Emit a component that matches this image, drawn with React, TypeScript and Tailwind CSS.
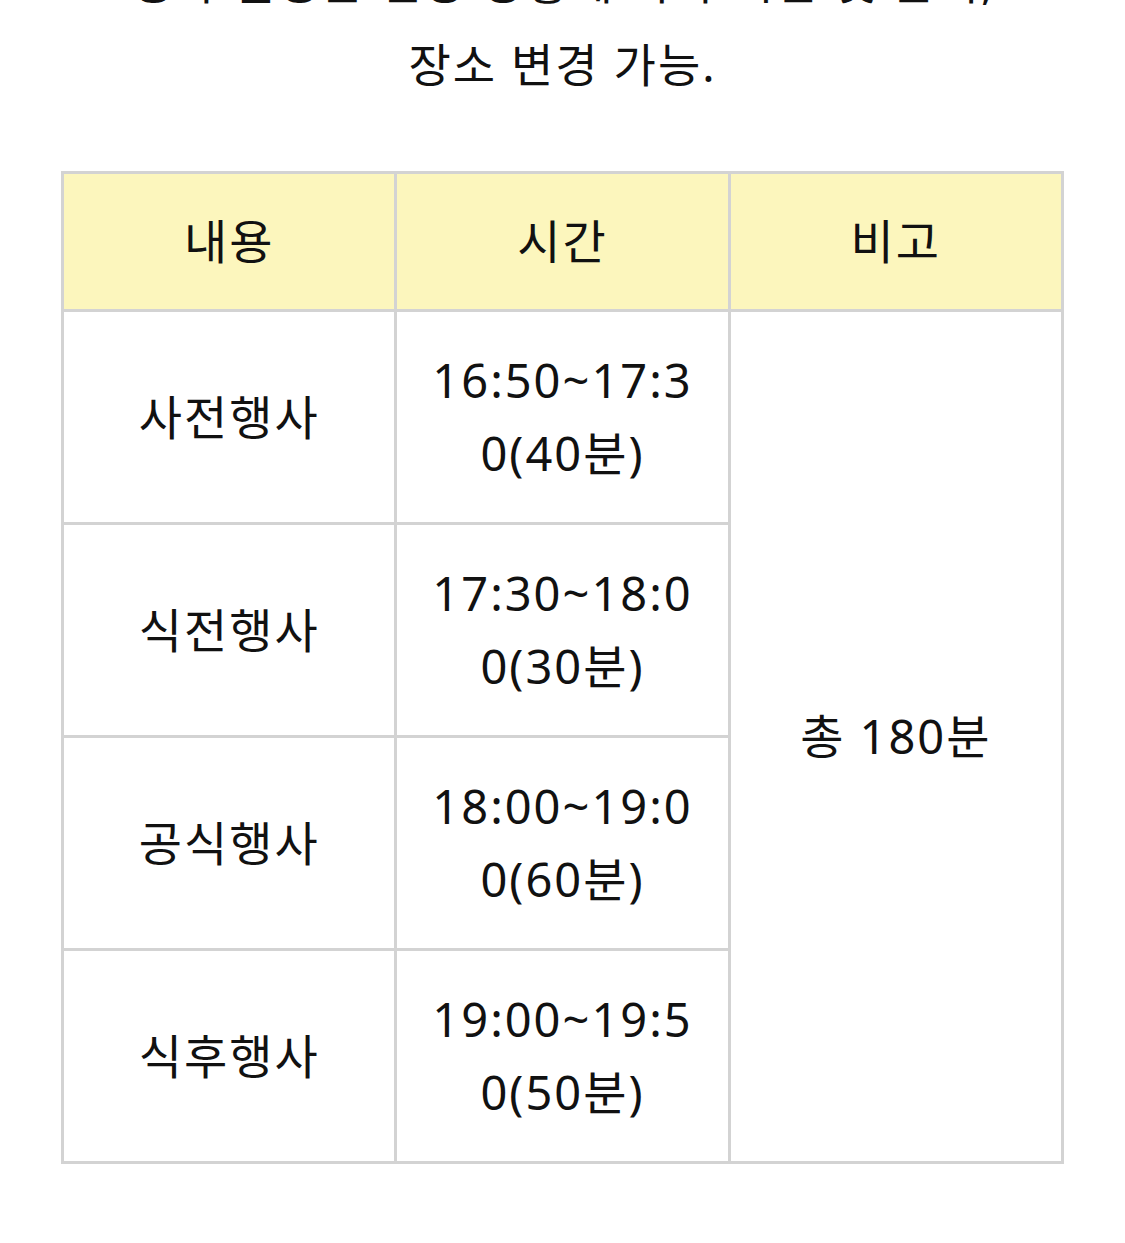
import React from "react";

const rows = [
  { name: "사전행사", time: "16:50~17:30(40분)" },
  { name: "식전행사", time: "17:30~18:00(30분)" },
  { name: "공식행사", time: "18:00~19:00(60분)" },
  { name: "식후행사", time: "19:00~19:50(50분)" },
];

export default function App() {
  return (
    <div
      className="min-h-[1243px] overflow-hidden bg-white px-[61px] text-[#111]"
      style={{ fontFamily: '"Noto Sans", "Noto Sans CJK KR", sans-serif' }}
    >
      {/* intro paragraph, first line scrolled out of view */}
      <p className="-mt-[60px] text-center text-[46px] leading-[83px] tracking-[2px]">
        행사 일정은 현장 상황에 따라 시간 및 순서,
        <br />
        장소 변경 가능.
      </p>

      <table className="mt-[65px] w-full table-fixed border-collapse border-[3px] border-[#d3d3d3] text-center text-[47px] leading-[73px] tracking-[2px]">
        <thead>
          <tr className="bg-[#fcf6bd]">
            <th className="h-[138px] border-[3px] border-[#d3d3d3] px-7 font-normal">내용</th>
            <th className="h-[138px] border-[3px] border-[#d3d3d3] px-7 font-normal">시간</th>
            <th className="h-[138px] border-[3px] border-[#d3d3d3] px-7 font-normal">비고</th>
          </tr>
        </thead>
        <tbody>
          {rows.map((r, i) => (
            <tr key={r.name}>
              <td className="h-[213px] border-[3px] border-[#d3d3d3] px-7">{r.name}</td>
              <td className="h-[213px] break-all border-[3px] border-[#d3d3d3] px-7">{r.time}</td>
              {i === 0 && (
                <td rowSpan={4} className="border-[3px] border-[#d3d3d3] px-7">
                  총 180분
                </td>
              )}
            </tr>
          ))}
        </tbody>
      </table>
    </div>
  );
}
